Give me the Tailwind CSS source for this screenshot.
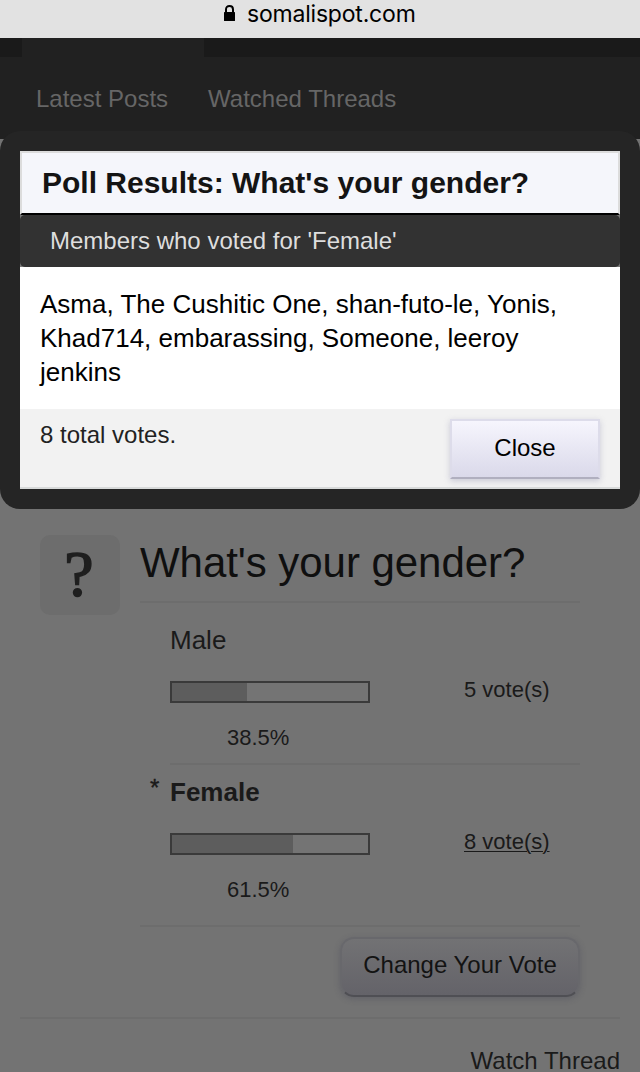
<!DOCTYPE html>
<html lang="en">
<head>
  <meta charset="UTF-8">
  <meta name="viewport" content="width=device-width, initial-scale=1.0">
  <title>Poll Results - somalispot.com</title>
  <script src="https://cdn.jsdelivr.net/npm/@tailwindcss/browser@4"></script>
</head>
<body class="relative h-[1072px] overflow-hidden bg-[#737373] font-['Liberation_Sans',Arial,sans-serif] text-[24px] leading-7 text-[#1a1a1a]">
  <!-- Address bar -->
  <header class="flex h-[38px] items-start bg-[#e2e2e2] pl-[224px] text-black">
    <svg class="mt-[5px] h-4 w-[11px]" viewBox="0 0 11 16" fill="none">
      <path d="M2 8V4.4C2 2.2 3.3 1 5.5 1S9 2.2 9 4.4V8" stroke="#000" stroke-width="2"/>
      <rect y="7" width="11" height="9" rx=".5" fill="#000"/>
    </svg>
    <span class="ml-3 whitespace-nowrap font-['Inter',sans-serif] text-[23px] tracking-[-0.2px]">somalispot.com</span>
  </header>

  <nav class="h-[101px] bg-[#212121] text-[#666]">
    <div class="flex h-[19px] justify-between bg-[#1a1a1a] pl-[22px]">
      <div class="w-[182px] bg-[#212121]"></div>
    </div>
    <div class="flex gap-10 pt-7 pl-9">
      <a>Latest Posts</a>
      <a>Watched Threads</a>
    </div>
  </nav>

  <!-- Poll -->
  <main class="pt-[396px]">
    <section class="mx-5 flex h-[484px] gap-5 border-b-2 border-[#6d6d6d] pl-5">
      <div class="flex size-20 shrink-0 items-center justify-center rounded-[10px] bg-[#6d6d6d] pr-[2px] font-['Liberation_Serif',serif] text-[66px] leading-[78px] text-[#1f1f1f] [-webkit-text-stroke:1.6px_#1f1f1f]"><span class="-mt-[3px]">?</span></div>
      <div class="w-[440px]">
        <h2 class="h-[68px] border-b-2 border-[#6d6d6d] pt-1 text-[42px] leading-[48px] tracking-[-0.05px] text-[#0f0f0f]">What's your gender?</h2>

        <div class="ml-[30px] h-[162px] border-b-2 border-[#6d6d6d] pt-[22px]">
          <h3 class="text-[26px] leading-[30px]">Male</h3>
          <div class="mt-[26px] flex text-[22px] leading-6">
            <div class="w-[200px]">
              <div class="h-[22px] border-2 border-[#3a3a3a] bg-[#747474]">
                <div class="h-full bg-[#5d5d5d]" style="width:38.5%"></div>
              </div>
            </div>
            <span class="-mt-[3px] ml-[94px]">5 vote(s)</span>
          </div>
          <p class="mt-[23px] pl-[57px] text-[22px] leading-6">38.5%</p>
        </div>

        <div class="relative ml-[30px] h-[160px] pt-[12px]">
          <span class="absolute top-[9px] -left-[20px] text-[24px] [-webkit-text-stroke:0.4px_#1a1a1a]">*</span>
          <h3 class="text-[26px] leading-[30px] font-bold">Female</h3>
          <div class="mt-[26px] flex text-[22px] leading-6">
            <div class="w-[200px]">
              <div class="h-[22px] border-2 border-[#3a3a3a] bg-[#747474]">
                <div class="h-full bg-[#5d5d5d]" style="width:61.5%"></div>
              </div>
            </div>
            <a class="-mt-[3px] ml-[94px] underline decoration-1 underline-offset-2">8 vote(s)</a>
          </div>
          <p class="mt-[23px] pl-[57px] text-[22px] leading-6">61.5%</p>
        </div>

        <div class="flex justify-end border-t-2 border-[#6d6d6d] pt-[10px]">
          <button class="h-[60px] w-60 rounded-[14px] border-2 border-[#68686c] border-b-[#4f4f54] bg-linear-to-b from-[#727274] to-[#646369] pb-1 text-[#131313] shadow-[0_2px_6px_rgba(60,60,80,0.3)]">Change Your Vote</button>
        </div>
      </div>
    </section>
    <p class="mt-7 pr-5 text-right">Watch Thread</p>
  </main>

  <!-- Results overlay -->
  <div class="absolute inset-x-0 top-[131px] h-[378px] rounded-[20px] bg-[#252525] p-5">
    <div class="bg-white">
      <h1 class="h-[64px] border-2 border-[#dcdcdc] border-b-black bg-[#f5f6fb] pl-5 text-[30px] leading-[59px] font-bold text-[#141414]">Poll Results: What's your gender?</h1>
      <div class="bg-[#777]">
        <h2 class="h-[52px] rounded-[5px] bg-[#323232] pl-[30px] leading-[52px] text-[#dedede]">Members who voted for 'Female'</h2>
      </div>
      <p class="h-[142px] px-5 pt-5 text-[26px] leading-[34px] text-black">Asma, The Cushitic One, shan-futo-le, Yonis, Khad714, embarassing, Someone, leeroy jenkins</p>
      <div class="flex h-20 justify-between border-b-2 border-[#d8dada] bg-[#f2f2f2] px-5 pt-[10px]">
        <span class="pt-[2px] text-[#222]">8 total votes.</span>
        <button class="h-[60px] w-[150px] border-2 border-[#dddcea] border-b-[#b0afbf] bg-linear-to-b from-[#f6f5fd] to-[#dad9ea] pb-[2px] text-black shadow-[0_2px_6px_rgba(150,150,180,0.45)]">Close</button>
      </div>
    </div>
  </div>
</body>
</html>
